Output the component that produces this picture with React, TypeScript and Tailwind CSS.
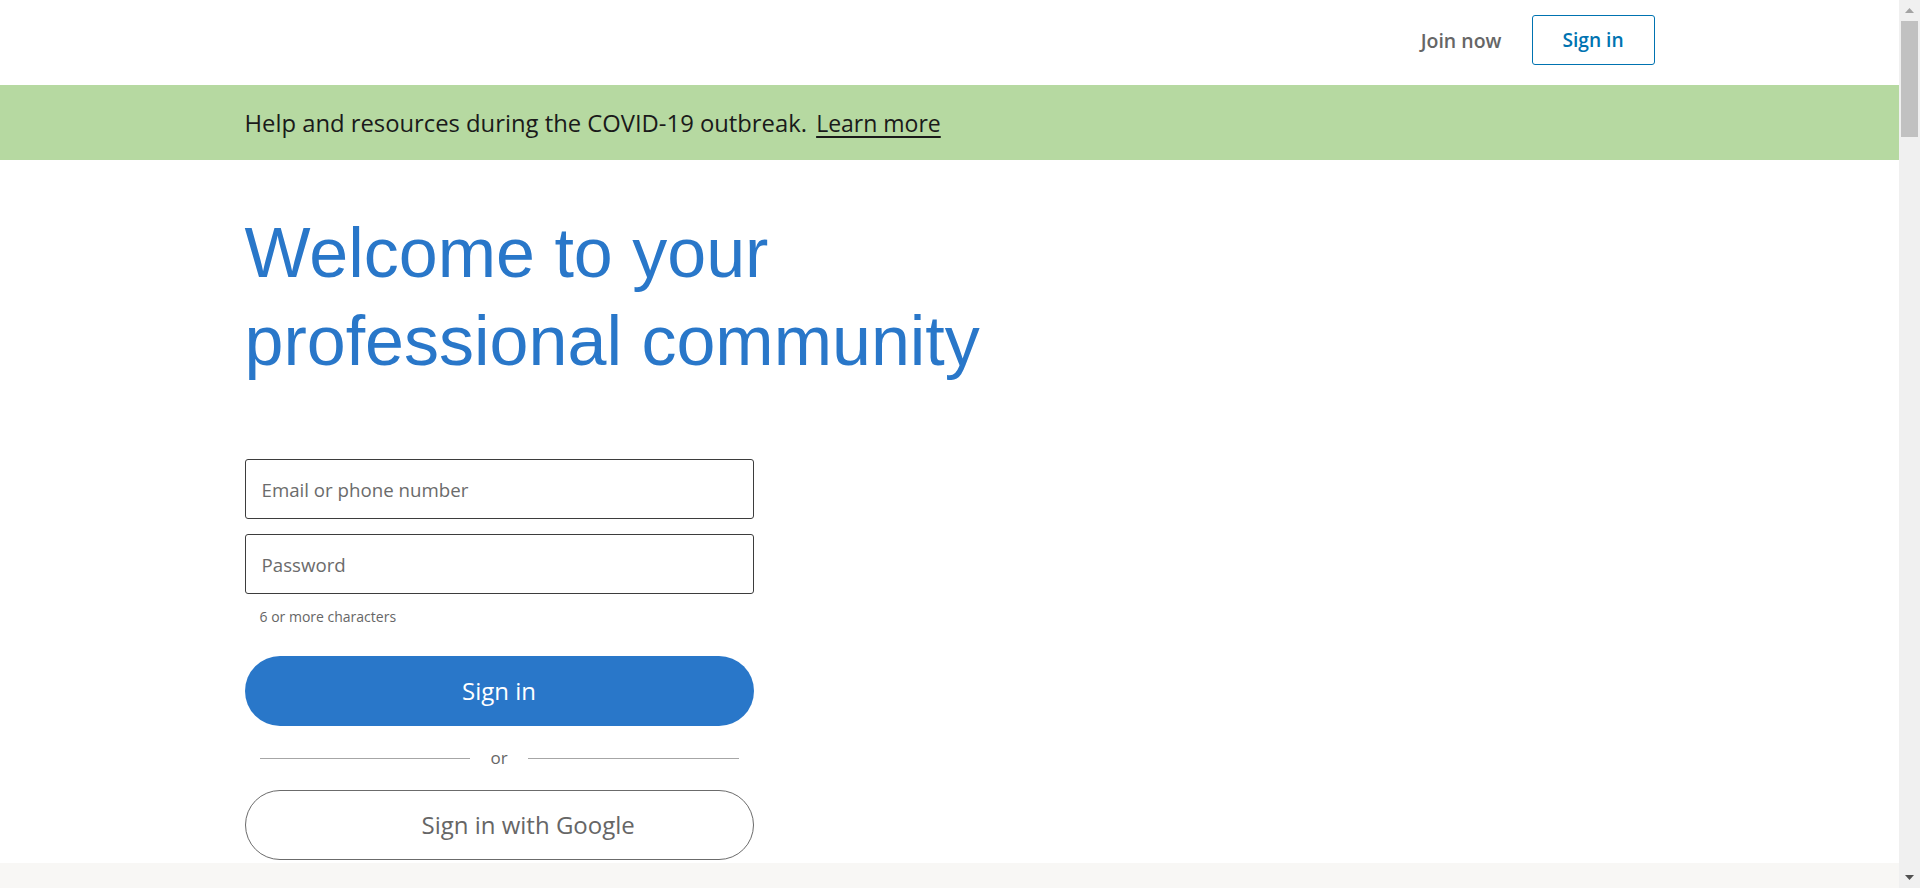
import React from "react";

const sans = { fontFamily: '"Open Sans", "Noto Sans", sans-serif' };

export default function App() {
  return (
    <div className="relative flex h-[888px] w-[1920px] overflow-hidden bg-white" style={sans}>
      <div className="flex min-w-0 flex-1 flex-col">
        <header className="h-[85px] shrink-0">
          <div className="mx-auto flex w-[1410px] items-center justify-end pt-[15px]">
            <a className="mt-[2px] mr-[30px] text-[19.5px] font-semibold text-[#666666]">Join now</a>
            <a className="flex h-[50px] w-[123px] items-center justify-center rounded-[3px] border border-[#0073b1] text-[19.2px] font-semibold text-[#0073b1]">
              Sign in
            </a>
          </div>
        </header>
        <div className="flex h-[75px] shrink-0 items-center bg-[#b6d9a1]">
          <div className="mx-auto w-[1410px] pt-[2px] text-[23.8px] text-[#1a1a1a]">
            Help and resources during the COVID-19 outbreak.{" "}
            <a className="ml-[3px] text-[23px] underline decoration-2 underline-offset-4">Learn more</a>
          </div>
        </div>
        <main className="mx-auto w-[1410px] shrink-0">
          <h1
            className="mt-[50px] text-[70px] leading-[87.5px] font-normal text-[#2977c9]"
            style={{ fontFamily: '"Liberation Sans", Arial, sans-serif' }}
          >
            <span className="block">Welcome to your</span>
            <span className="block">professional community</span>
          </h1>
          <form className="mt-[74px] flex w-[509px] flex-col">
            <input
              className="h-[60px] rounded-[3px] border border-[#3d3d3d] px-[16px] text-[18.7px] text-[#333] outline-none placeholder:text-[#6b6b6b]"
              placeholder="Email or phone number"
            />
            <input
              className="mt-[15px] h-[60px] rounded-[3px] border border-[#3d3d3d] px-[16px] text-[18.7px] text-[#333] outline-none placeholder:text-[#6b6b6b]"
              placeholder="Password"
              type="password"
            />
            <p className="mt-[13px] pl-[15px] text-[14px] leading-[20px] text-[#666666]">6 or more characters</p>
            <button
              type="button"
              className="mt-[29px] h-[70px] rounded-full bg-[#2977c9] text-[24px] text-white"
            >
              Sign in
            </button>
            <div className="mt-[20px] flex h-[24px] items-center px-[15px]">
              <div className="h-px flex-1 bg-[#a6a6a6]" />
              <span className="px-[20px] text-[17px] text-[#666666]">or</span>
              <div className="h-px flex-1 bg-[#a6a6a6]" />
            </div>
            <button
              type="button"
              className="mt-[20px] flex h-[70px] items-center rounded-full border border-[#6b6b6b] pl-[176px] text-[24px] text-[#666666]"
            >
              Sign in with Google
            </button>
          </form>
        </main>
        <div className="mt-[3px] flex-1 bg-[#f8f7f5]" />
      </div>
      <div className="flex w-[21px] shrink-0 flex-col bg-[#f0f0f0]">
        <div className="flex h-[21px] items-center justify-center">
          <svg width="9" height="5" viewBox="0 0 9 5">
            <path d="M0 5 L4.5 0 L9 5 Z" fill="#a3a3a3" />
          </svg>
        </div>
        <div className="mx-[2px] h-[116px] bg-[#c1c1c1]" />
        <div className="flex-1" />
        <div className="flex h-[21px] items-center justify-center">
          <svg width="9" height="5" viewBox="0 0 9 5">
            <path d="M0 0 L9 0 L4.5 5 Z" fill="#505050" />
          </svg>
        </div>
      </div>
    </div>
  );
}
